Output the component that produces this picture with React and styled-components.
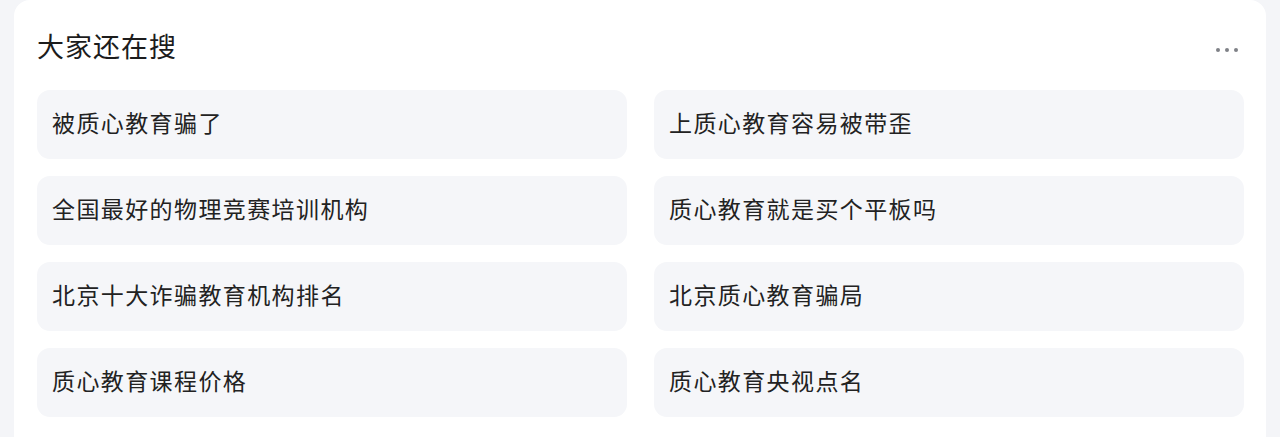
import React from "react";
import styled, { createGlobalStyle } from "styled-components";

const Global = createGlobalStyle`
  html, body { margin: 0; padding: 0; background: #f4f5f8; }
  body { font-family: "Noto Sans CJK SC", "Noto Sans", sans-serif; }
`;

const Page = styled.div`
  padding: 0 14px;
  height: 437px;
  overflow: hidden;
`;

const Card = styled.section`
  background: #ffffff;
  border-radius: 16px;
  padding: 21px 22px 40px 23px;
`;

const Header = styled.div`
  display: flex;
  align-items: center;
  justify-content: space-between;
  height: 50px;
  margin-bottom: 19px;
`;

const Title = styled.h2`
  margin: 0;
  font-size: 27px;
  line-height: 36px;
  font-weight: 400;
  letter-spacing: 1px;
  color: #1c1c1c;
`;

const More = styled.button`
  border: 0;
  background: none;
  padding: 0;
  margin-right: 6px;
  margin-top: 7px;
  display: flex;
  gap: 5px;
  cursor: pointer;
`;

const Dot = styled.span`
  width: 4px;
  height: 4px;
  border-radius: 50%;
  background: #7f8187;
`;

const Grid = styled.div`
  display: grid;
  grid-template-columns: 1fr 1fr;
  column-gap: 27px;
  row-gap: 17px;
`;

const Item = styled.a`
  display: flex;
  align-items: center;
  box-sizing: border-box;
  height: 69px;
  padding: 0 15px 5px;
  background: #f5f6f9;
  border-radius: 13px;
  font-size: 23px;
  line-height: 32px;
  letter-spacing: 1.4px;
  color: #222222;
  text-decoration: none;
`;

const items = [
  "被质心教育骗了",
  "上质心教育容易被带歪",
  "全国最好的物理竞赛培训机构",
  "质心教育就是买个平板吗",
  "北京十大诈骗教育机构排名",
  "北京质心教育骗局",
  "质心教育课程价格",
  "质心教育央视点名",
];

export default function App() {
  return (
    <>
      <Global />
      <Page>
        <Card>
          <Header>
            <Title>大家还在搜</Title>
            <More aria-label="更多">
              <Dot />
              <Dot />
              <Dot />
            </More>
          </Header>
          <Grid>
            {items.map((t) => (
              <Item key={t}>{t}</Item>
            ))}
          </Grid>
        </Card>
      </Page>
    </>
  );
}
